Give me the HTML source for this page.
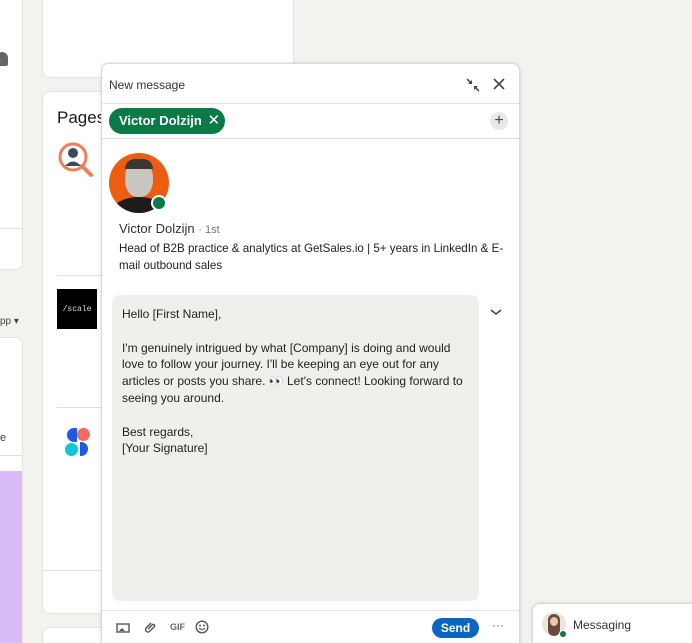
<!DOCTYPE html>
<html><head><style>
*{box-sizing:border-box;margin:0;padding:0}
html,body{width:692px;height:643px;overflow:hidden}
body{background:#f4f2ee;font-family:"Liberation Sans",sans-serif;position:relative;color:#191919}
.card{position:absolute;background:#fff;border-radius:8px;border:1px solid #e6e4df}
.ab{position:absolute}
</style></head><body>
<div class="card" style="left:-10px;top:-10px;width:33px;height:280px"></div>
<div class="ab" style="left:-4px;top:52px;width:12px;height:14px;background:#666;border-radius:6px 6px 2px 2px"></div>
<div class="ab" style="left:0;top:228px;width:23px;height:1px;background:#e0dfdc"></div>
<div class="ab" style="left:0;top:316px;font-size:10px;color:#444">pp ▾</div>
<div class="card" style="left:-10px;top:337px;width:33px;height:320px;overflow:hidden">
 <div class="ab" style="left:0;top:117px;width:33px;height:1px;background:#e0dfdc"></div>
 <div class="ab" style="left:0;top:133px;width:33px;height:200px;background:#d9bcf7"></div>
</div>
<div class="ab" style="left:0;top:432px;font-size:11px;color:#444">e</div>
<div class="card" style="left:42px;top:-10px;width:252px;height:88px"></div>
<div class="card" style="left:42px;top:91px;width:252px;height:523px">
 <div class="ab" style="left:14px;top:16px;font-size:17px;color:#191919">Pages</div>
 <svg class="ab" style="left:13px;top:48px" width="40" height="40" viewBox="0 0 40 40"><circle cx="17" cy="17" r="13" fill="none" stroke="#f47d58" stroke-width="3"/><line x1="26" y1="26" x2="35" y2="35" stroke="#f47d58" stroke-width="4" stroke-linecap="round"/><circle cx="17" cy="13" r="5" fill="#3b4a5e"/><path d="M9 26 q8-9 16 0z" fill="#3b4a5e"/></svg>
 <div class="ab" style="left:14px;top:183px;width:238px;height:1px;background:#e0dfdc"></div>
 <div class="ab" style="left:14px;top:197px;width:40px;height:40px;background:#000;color:#ddd;font:8px 'Liberation Mono',monospace;display:flex;align-items:center;justify-content:center">/scale</div>
 <div class="ab" style="left:14px;top:315px;width:238px;height:1px;background:#e0dfdc"></div>
 <div class="ab" style="left:24px;top:336px;width:10px;height:14px;background:#1e5ae8;border-radius:7px 0 0 7px"></div>
 <div class="ab" style="left:34px;top:336px;width:13px;height:13px;background:#f26b61;border-radius:50%"></div>
 <div class="ab" style="left:22px;top:351px;width:13px;height:13px;background:#0ec7d6;border-radius:50%"></div>
 <div class="ab" style="left:37px;top:350px;width:8px;height:14px;background:#1e5ae8;border-radius:0 7px 7px 0"></div>
 <div class="ab" style="left:0;top:478px;width:252px;height:1px;background:#e0dfdc"></div>
</div>
<div class="card" style="left:42px;top:627px;width:252px;height:40px"></div>

<div class="ab" style="left:101px;top:63px;width:419px;height:590px;background:#fff;border:1px solid #dcdad5;border-radius:8px 8px 0 0;box-shadow:0 0 3px rgba(0,0,0,.15)">
 <div class="ab" style="left:7px;top:14px;font-size:12px;color:#333">New message</div>
 <svg class="ab" style="left:363px;top:13px" width="16" height="16" viewBox="0 0 16 16" stroke="#444" stroke-width="1.5" fill="#444"><line x1="2" y1="2" x2="6" y2="6"/><path d="M7 7 L7 3 L3 7z" stroke="none"/><line x1="14" y1="14" x2="10" y2="10"/><path d="M9 9 L9 13 L13 9z" stroke="none"/></svg>
 <svg class="ab" style="left:390px;top:13px" width="14" height="14" viewBox="0 0 14 14" stroke="#444" stroke-width="1.6"><line x1="2" y1="2" x2="12" y2="12"/><line x1="12" y1="2" x2="2" y2="12"/></svg>
 <div class="ab" style="left:0;top:39px;width:417px;height:1px;background:#e6e4df"></div>
 <div class="ab" style="left:7px;top:44px;height:26px;width:116px;background:#0a7a47;border-radius:13px;color:#fff;font-weight:bold;font-size:13px;line-height:26px;padding-left:10px">Victor Dolzijn <span style="font-weight:normal;font-size:15px;margin-left:2px">✕</span></div>
 <div class="ab" style="left:388px;top:48px;width:18px;height:18px;border-radius:50%;background:#e8e8e8;color:#444;font-size:16px;line-height:17px;text-align:center">+</div>
 <div class="ab" style="left:0;top:74px;width:417px;height:1px;background:#dedcd8"></div>
 <div class="ab" style="left:7px;top:89px;width:60px;height:60px;border-radius:50%;background:#ec5d12;overflow:hidden">
  <div class="ab" style="left:16px;top:8px;width:28px;height:36px;border-radius:45%;background:#c9c6c2"></div>
  <div class="ab" style="left:16px;top:6px;width:28px;height:10px;border-radius:10px 10px 0 0;background:#3a3735"></div>
  <div class="ab" style="left:3px;top:44px;width:54px;height:30px;border-radius:50% 50% 0 0;background:#1e1c1b"></div>
 </div>
 <div class="ab" style="left:49px;top:131px;width:16px;height:16px;border-radius:50%;background:#0a7a47;border:2px solid #fff"></div>
 <div class="ab" style="left:17px;top:157px;font-size:13px;color:#333">Victor Dolzijn <span style="font-size:11px;color:#777">· 1st</span></div>
 <div class="ab" style="left:17px;top:176px;width:392px;font-size:11.6px;line-height:17px;color:#222">Head of B2B practice &amp; analytics at GetSales.io | 5+ years in LinkedIn &amp; E-mail outbound sales</div>
 <div class="ab" style="left:10px;top:231px;width:367px;height:306px;background:#f0efeb;border-radius:8px;padding:11px 10px;font-size:12px;line-height:16.8px;color:#222">Hello [First Name],<br><br>I'm genuinely intrigued by what [Company] is doing and would love to follow your journey. I'll be keeping an eye out for any articles or posts you share. 👀 Let's connect! Looking forward to seeing you around.<br><br>Best regards,<br>[Your Signature]</div>
 <svg class="ab" style="left:387px;top:243px" width="14" height="10" viewBox="0 0 14 10"><path d="M2 3 L7 7 L12 3" fill="none" stroke="#444" stroke-width="1.5"/></svg>
 <div class="ab" style="left:0;top:546px;width:417px;height:1px;background:#e6e4df"></div>
 <svg class="ab" style="left:14px;top:558px" width="14" height="12" viewBox="0 0 14 12"><rect x="1" y="2" width="12" height="8" fill="none" stroke="#555" stroke-width="1.4"/><path d="M3 9 L6 6 L9 9z" fill="#555"/></svg>
 <svg class="ab" style="left:41px;top:556px" width="14" height="14" viewBox="0 0 14 14"><path d="M8 3 L3 8 a2.5 2.5 0 0 0 3.5 3.5 L11.5 6.5 a1.5 1.5 0 0 0 -2 -2 L5 9" fill="none" stroke="#555" stroke-width="1.4"/></svg>
 <div class="ab" style="left:68px;top:558px;font-size:9px;font-weight:bold;color:#666">GIF</div>
 <svg class="ab" style="left:93px;top:556px" width="14" height="14" viewBox="0 0 14 14"><circle cx="7" cy="7" r="5.8" fill="none" stroke="#555" stroke-width="1.4"/><circle cx="5" cy="5.5" r="1" fill="#555"/><circle cx="9" cy="5.5" r="1" fill="#555"/><path d="M4 8 Q7 11 10 8" fill="none" stroke="#555" stroke-width="1.2"/></svg>
 <div class="ab" style="left:330px;top:554px;width:47px;height:20px;border-radius:10px;background:#0a66c2;color:#fff;font-weight:bold;font-size:12px;line-height:20px;text-align:center">Send</div>
 <div class="ab" style="left:390px;top:554px;font-size:12px;color:#555">···</div>
</div>

<div class="ab" style="left:532px;top:603px;width:170px;height:50px;background:#fff;border:1px solid #dcdad5;border-radius:8px 8px 0 0;box-shadow:0 0 3px rgba(0,0,0,.12)">
 <div class="ab" style="left:9px;top:8px;width:24px;height:24px;border-radius:50%;background:#e8e4e0;overflow:hidden"><div class="ab" style="left:6px;top:2px;width:12px;height:22px;border-radius:6px;background:#6b4a36"></div><div class="ab" style="left:8px;top:5px;width:8px;height:9px;border-radius:50%;background:#e9c8b2"></div></div>
 <div class="ab" style="left:26px;top:26px;width:8px;height:8px;border-radius:50%;background:#0a7a47;border:1px solid #fff"></div>
 <div class="ab" style="left:40px;top:14px;font-size:12px;color:#333">Messaging</div>
</div>
</body></html>
